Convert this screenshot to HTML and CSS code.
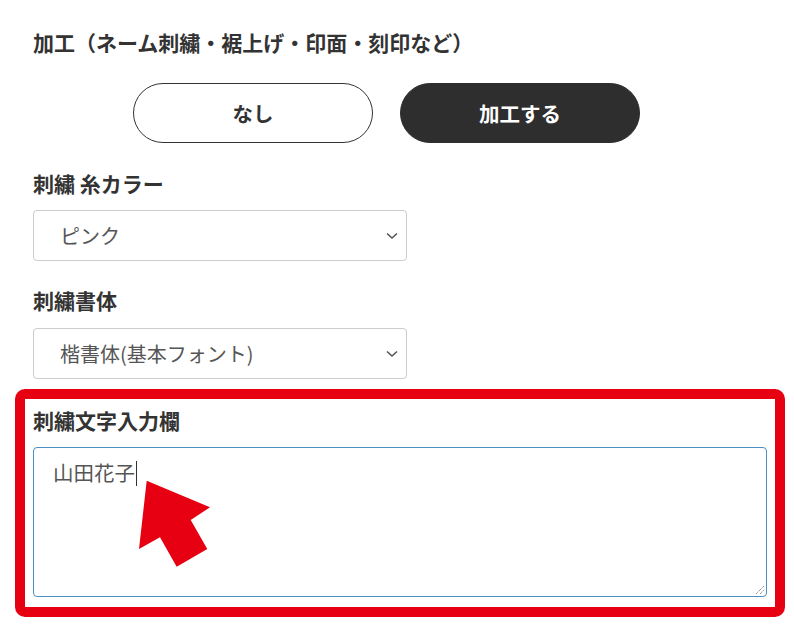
FILE: index.html
```html
<!DOCTYPE html>
<html lang="ja">
<head>
<meta charset="utf-8">
<link rel="stylesheet" href="styles.css">
</head>
<body>
<div class="page">
  <div class="section">
    <h2 class="title">加工（ネーム刺繍・裾上げ・印面・刻印など）</h2>
    <div class="choices">
      <button class="choice">なし</button>
      <button class="choice active">加工する</button>
    </div>
    <div class="label mt-label1">刺繍 糸カラー</div>
    <div class="select mt-sel1">
      <span class="select-text">ピンク</span>
      <svg class="chev" width="12" height="8" viewBox="0 0 12 8"><polyline points="1,1.5 6,6 11,1.5" fill="none" stroke="#555" stroke-width="1.6"/></svg>
    </div>
    <div class="label mt-label2">刺繍書体</div>
    <div class="select mt-sel2">
      <span class="select-text">楷書体(基本フォント)</span>
      <svg class="chev" width="12" height="8" viewBox="0 0 12 8"><polyline points="1,1.5 6,6 11,1.5" fill="none" stroke="#555" stroke-width="1.6"/></svg>
    </div>
  </div>
  <div class="highlight">
    <div class="label">刺繍文字入力欄</div>
    <div class="textarea">
      <span class="ta-text">山田花子</span><span class="caret"></span>
      <svg class="grip" width="10" height="10" viewBox="0 0 10 10"><line x1="1" y1="9" x2="9" y2="1" stroke="#777" stroke-width="1" stroke-dasharray="1.2 0.8"/><line x1="5" y1="9" x2="9" y2="5" stroke="#777" stroke-width="1" stroke-dasharray="1.2 0.8"/></svg>
      <svg class="arrow" width="734" height="150" viewBox="0 0 734 150"><polygon points="113.7,33.7 177,60.3 157.7,73 174.3,102 143.7,119.7 127,90.3 106,102" fill="#e60012"/></svg>
    </div>
  </div>
</div>
</body>
</html>
```
FILE: styles.css
```css
* { box-sizing: border-box; }
html, body { margin: 0; padding: 0; background: #fff; }
body {
  font-family: "Noto Sans CJK JP", "Noto Sans", sans-serif;
  color: #333;
  width: 794px;
  height: 636px;
  overflow: hidden;
}
.page { padding-top: 27px; }
.section { padding-left: 33px; }
.title {
  margin: 0;
  font-size: 21px;
  line-height: 30px;
  font-weight: bold;
  color: #333;
}
.choices {
  display: flex;
  gap: 27px;
  margin: 26px 0 0 100px;
}
.choice {
  width: 240px;
  height: 60px;
  border-radius: 30px;
  border: 1px solid #333;
  background: #fff;
  color: #333;
  font-family: inherit;
  font-size: 20.5px;
  font-weight: bold;
  padding: 0;
}
.choice.active {
  background: #2e2e2e;
  border-color: #2e2e2e;
  color: #fff;
}
.label {
  font-size: 21px;
  line-height: 30px;
  font-weight: bold;
  color: #333;
}
.mt-label1 { margin-top: 25px; }
.mt-label2 { margin-top: 24px; }
.mt-sel1 { margin-top: 12px; }
.mt-sel2 { margin-top: 13px; }
.select {
  width: 374px;
  height: 51px;
  border: 1px solid #ccc;
  border-radius: 4px;
  display: flex;
  align-items: center;
  justify-content: space-between;
  padding: 0 8px 0 26px;
}
.select-text {
  font-size: 20px;
  color: #555;
}
.chev { display: block; }
.highlight {
  margin: 10px 0 0 15px;
  width: 770px;
  border: 10px solid #e60012;
  border-radius: 10px;
  padding: 6px 8px 10px 8px;
}
.textarea {
  position: relative;
  margin-top: 12px;
  height: 150px;
  border: 1px solid #4a90c2;
  border-radius: 4px;
  padding: 9px 19px;
  font-size: 20.5px;
  line-height: 30px;
  color: #555;
}
.caret {
  display: inline-block;
  width: 1px;
  height: 25px;
  background: #333;
  vertical-align: -5px;
  margin-left: 1px;
}
.grip {
  position: absolute;
  right: 1px;
  bottom: 1px;
}
.arrow {
  position: absolute;
  left: -1px;
  top: -1px;
}
```
